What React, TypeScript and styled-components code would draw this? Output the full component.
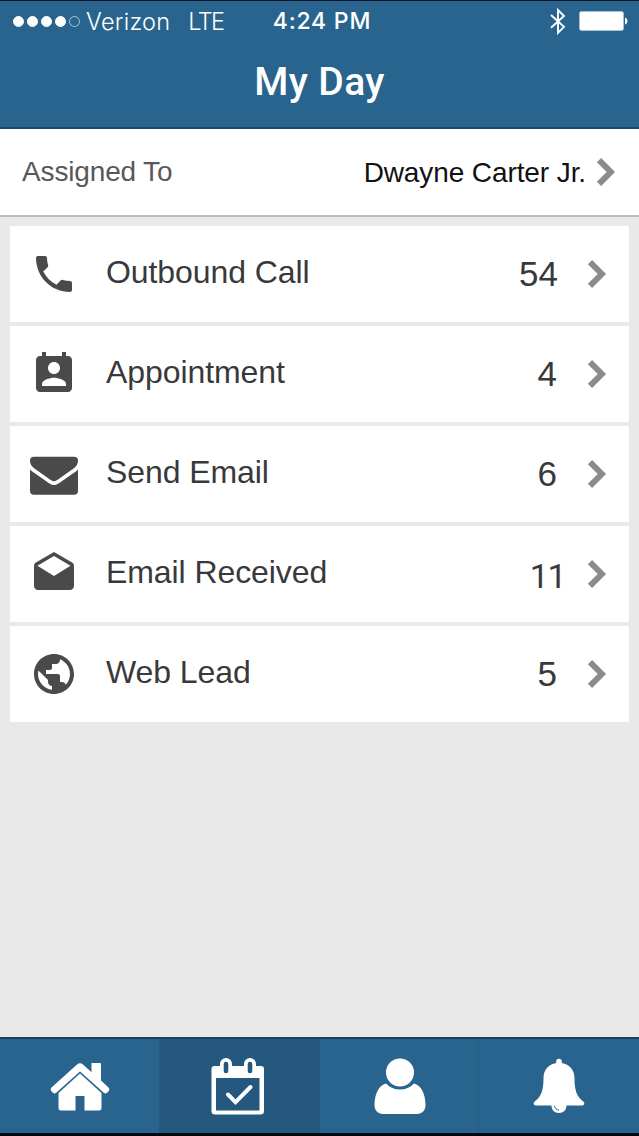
import React from "react";
import styled, { createGlobalStyle } from "styled-components";

const GlobalStyle = createGlobalStyle`
  *, *::before, *::after { box-sizing: border-box; }
  body {
    margin: 0;
    background: #e9e9ea;
    font-family: "Liberation Sans", Arial, sans-serif;
  }
`;

const Screen = styled.div`
  display: flex;
  flex-direction: column;
  width: 639px;
  height: 1136px;
  overflow: hidden;
  background: #e9e9ea;
`;

const Header = styled.header`
  display: flex;
  flex-direction: column;
  height: 129px;
  background: #28648e;
  border-top: 1px solid #0a1423;
  border-bottom: 2px solid #1f4668;
  color: #fff;
`;

const StatusBar = styled.div`
  display: grid;
  grid-template-columns: 1fr auto 1fr;
  align-items: center;
  height: 40px;
  padding: 0 11px 0 13px;
`;

const Carrier = styled.div`
  display: flex;
  align-items: center;
`;

const SignalDots = styled.div`
  display: flex;
  gap: 3px;
`;

const Dot = styled.i<{ $filled: boolean }>`
  width: 11px;
  height: 11px;
  border-radius: 50%;
  background: ${(p) => (p.$filled ? "#fff" : "transparent")};
  border: 1px solid ${(p) => (p.$filled ? "#fff" : "#a9c6da")};
`;

const StatusText = styled.span<{ $left: number; $spacing: number }>`
  margin-left: ${(p) => p.$left}px;
  padding-top: 2px;
  font: 300 23.5px/38px Inter, sans-serif;
  letter-spacing: ${(p) => p.$spacing}px;
`;

const Clock = styled.span`
  padding-left: 3px;
  font: 500 23px/38px Inter, sans-serif;
  letter-spacing: 0.8px;
`;

const StatusIcons = styled.div`
  display: flex;
  justify-content: flex-end;
  align-items: center;
  gap: 13px;
`;

const Title = styled.h1`
  margin: 0;
  padding-top: 1px;
  text-align: center;
  font: 500 39px/80px Roboto, sans-serif;
  letter-spacing: 0.4px;
`;

const AssignedRow = styled.section`
  display: flex;
  align-items: center;
  height: 88px;
  padding: 0 23px 0 22px;
  background: #fff;
  border-bottom: 2px solid #bcbcbe;
  font-size: 28px;
`;

const AssignedLabel = styled.span`
  flex: 1;
  letter-spacing: -0.15px;
  color: #58585a;
`;

const Assignee = styled.span`
  margin-right: 10px;
  padding-top: 1px;
  letter-spacing: -0.1px;
  color: #111;
`;

const List = styled.main`
  flex: 1;
  display: flex;
  flex-direction: column;
  gap: 4px;
  padding: 9px 10px 0;
`;

const Row = styled.div`
  display: flex;
  align-items: center;
  height: 96px;
  padding: 0 22px 0 20px;
  background: #fff;
`;

const RowLabel = styled.span`
  flex: 1;
  margin-left: 28px;
  padding-bottom: 3px;
  font-size: 32px;
  letter-spacing: -0.08px;
  color: #39393b;
`;

const Count = styled.span<{ $narrow: boolean; $gap: number }>`
  margin-right: ${(p) => p.$gap}px;
  padding: ${(p) => (p.$narrow ? "3px 0 0" : "0 0 1px")};
  font-family: ${(p) => (p.$narrow ? "Roboto" : '"Liberation Sans"')}, sans-serif;
  font-size: ${(p) => (p.$narrow ? 34 : 35)}px;
  letter-spacing: ${(p) => (p.$narrow ? -1.5 : 0)}px;
  color: #39393b;
`;

const TabBar = styled.nav`
  display: grid;
  grid-template-columns: 159px 161px 159px 160px;
  height: 99px;
  border-top: 2px solid #1d3f5b;
  border-bottom: 3px solid #04080d;
`;

const Tab = styled.div<{ $active?: boolean; $divider?: boolean }>`
  display: flex;
  justify-content: center;
  padding-right: ${(p) => (p.$active ? 4 : 0)}px;
  background: ${(p) => (p.$active ? "#24587e" : "#28648e")};
  box-shadow: ${(p) => (p.$divider ? "inset -1px 0 #255c84" : "none")};
`;

const TabSvg = styled.svg`
  width: 80px;
  height: 94px;
  fill: #fff;
`;

const RowSvg = styled.svg`
  width: 48px;
  height: 48px;
  fill: #4a4a4c;
`;

const Chevron = () => (
  <svg width="20" height="30" viewBox="0 0 20 30" fill="none" stroke="#8b8b8d" strokeWidth="6">
    <path d="M3 3.2L14.8 15L3 26.8" />
  </svg>
);

const icons = {
  phone: (
    <path d="M6.62 10.79c1.44 2.83 3.76 5.14 6.59 6.59l2.2-2.2c.27-.27.67-.36 1.02-.24 1.12.37 2.33.57 3.57.57.55 0 1 .45 1 1V20c0 .55-.45 1-1 1-9.39 0-17-7.61-17-17 0-.55.45-1 1-1h3.5c.55 0 1 .45 1 1 0 1.25.2 2.45.57 3.57.11.35.03.74-.25 1.02l-2.2 2.2z" />
  ),
  appointment: (
    <path d="M19 3h-1V1h-2v2H8V1H6v2H5c-1.11 0-2 .9-2 2v14c0 1.1.89 2 2 2h14c1.1 0 2-.9 2-2V5c0-1.1-.9-2-2-2zm-7 3c1.66 0 3 1.34 3 3s-1.34 3-3 3-3-1.34-3-3 1.34-3 3-3zm6 12H6v-1c0-2 4-3.1 6-3.1s6 1.1 6 3.1v1z" />
  ),
  envelope: (
    <path d="M2 3.4h20a2 2 0 0 1 2 2C24 7.2 22.9 8.5 21.6 9.4L14.7 14.2C13.8 14.8 12.9 15.6 12 15.6S10.2 14.8 9.3 14.2L2.4 9.4C1.1 8.5 0 7.2 0 5.4a2 2 0 0 1 2-2zM0 9.7C.5 10.2 1 10.6 1.5 11L9 16.2C10 16.9 11 17.5 12 17.5S14 16.9 15 16.2L22.5 11C23 10.6 23.5 10.2 24 9.7V20.4a2 2 0 0 1-2 2H2a2 2 0 0 1-2-2z" />
  ),
  openEnvelope: (
    <path d="M21.99 8c0-.72-.37-1.35-.94-1.7L12 1 2.95 6.3C2.38 6.65 2 7.28 2 8v10c0 1.1.9 2 2 2h16c1.1 0 2-.9 2-2l-.01-10zM12 13L3.74 7.84 12 3l8.26 4.84L12 13z" />
  ),
  globe: (
    <path d="M12 2C6.48 2 2 6.48 2 12s4.48 10 10 10 10-4.48 10-10S17.52 2 12 2zm-1 17.93c-3.95-.49-7-3.85-7-7.93 0-.62.08-1.21.21-1.79L9 15v1c0 1.1.9 2 2 2v1.93zm6.9-2.54c-.26-.81-1-1.39-1.9-1.39h-1v-3c0-.55-.45-1-1-1H8v-2h2c.55 0 1-.45 1-1V7h2c1.1 0 2-.9 2-2v-.41c2.93 1.19 5 4.06 5 7.41 0 2.08-.8 3.97-2.1 5.39z" />
  ),
};

const rows: { label: string; count: string; gap: number; icon: keyof typeof icons }[] = [
  { label: "Outbound Call", count: "54", gap: 29, icon: "phone" },
  { label: "Appointment", count: "4", gap: 30, icon: "appointment" },
  { label: "Send Email", count: "6", gap: 30, icon: "envelope" },
  { label: "Email Received", count: "11", gap: 22, icon: "openEnvelope" },
  { label: "Web Lead", count: "5", gap: 30, icon: "globe" },
];

export default function App() {
  return (
    <>
      <GlobalStyle />
      <Screen>
        <Header>
          <StatusBar>
            <Carrier>
              <SignalDots>
                {[true, true, true, true, false].map((filled, i) => (
                  <Dot key={i} $filled={filled} />
                ))}
              </SignalDots>
              <StatusText $left={6} $spacing={0.25}>Verizon</StatusText>
              <StatusText $left={18} $spacing={-1.6}>LTE</StatusText>
            </Carrier>
            <Clock>4:24 PM</Clock>
            <StatusIcons>
              <svg width="16" height="27" viewBox="0 0 16 27" fill="none" stroke="#fff" strokeWidth="1.9">
                <path d="M1 7L14 18.8L8 24.8V2L14 8L1 19.8" />
              </svg>
              <svg width="49" height="20" viewBox="0 0 49 20" fill="#fff">
                <rect x=".5" y=".5" width="44" height="19" rx="2" fill="#fff" stroke="#a5c2d6" />
                <path d="M46 6.5C49.2 7.5 49.2 12.5 46 13.5Z" />
              </svg>
            </StatusIcons>
          </StatusBar>
          <Title>My Day</Title>
        </Header>

        <AssignedRow>
          <AssignedLabel>Assigned To</AssignedLabel>
          <Assignee>Dwayne Carter Jr.</Assignee>
          <Chevron />
        </AssignedRow>

        <List>
          {rows.map((row) => (
            <Row key={row.label}>
              <RowSvg viewBox="0 0 24 24">{icons[row.icon]}</RowSvg>
              <RowLabel>{row.label}</RowLabel>
              <Count $narrow={row.count === "11"} $gap={row.gap}>{row.count}</Count>
              <Chevron />
            </Row>
          ))}
        </List>

        <TabBar>
          <Tab>
            <TabSvg viewBox="0 0 80 94">
              <path d="M51.5 24H60a1 1 0 0 1 1 1V41.5L68.5 48.5a2.6 2.6 0 0 1 .3 3.5l-1.5 1.6a2.6 2.6 0 0 1-3.5.2L40 32.5L16.2 53.8a2.6 2.6 0 0 1-3.5-.2L11.2 52a2.6 2.6 0 0 1 .3-3.5L37 25.5a4.5 4.5 0 0 1 6 0L51.5 33.2Z" />
              <path d="M40 34.5L61.5 54V69a2.5 2.5 0 0 1-2.5 2.5H44.5V57H35.5V71.5H21a2.5 2.5 0 0 1-2.5-2.5V54Z" />
            </TabSvg>
          </Tab>
          <Tab $active>
            <TabSvg viewBox="0 0 80 94">
              <path fillRule="evenodd" d="M16.5 27H22V25a6 6 0 0 1 12 0V27H46V25a6 6 0 0 1 12 0V27H63a3 3 0 0 1 3 3V72a3.5 3.5 0 0 1-3.5 3.5H17a3.5 3.5 0 0 1-3.5-3.5V30a3 3 0 0 1 3-3ZM18 39V71.5H61.5V39ZM25.7 25V32a2.3 2.3 0 0 0 4.6 0V25a2.3 2.3 0 0 0-4.6 0ZM49.7 25V32a2.3 2.3 0 0 0 4.6 0V25a2.3 2.3 0 0 0-4.6 0Z" />
              <path d="M30 55.5L37.5 63.2L52.5 48" fill="none" stroke="#fff" strokeWidth="4" strokeLinecap="round" />
            </TabSvg>
          </Tab>
          <Tab $divider>
            <TabSvg viewBox="0 0 80 94">
              <circle cx="40" cy="33.5" r="14" />
              <path d="M26 44.5C30 48.5 34.5 50.5 40 50.5S50 48.5 54 44.5C61 46 65.5 55 65.5 66C65.5 71.5 62 75 57 75H23C18 75 14.5 71.5 14.5 66C14.5 55 19 46 26 44.5Z" />
            </TabSvg>
          </Tab>
          <Tab>
            <TabSvg viewBox="0 0 80 94">
              <path d="M37.2 24V22.5a2.8 2.8 0 0 1 5.6 0V24C50.5 25.3 55.5 31 55.5 39C55.5 52 58 57.5 64 62.2C66.5 64.2 65 66.5 62.5 66.5H47.5C47.5 71 44.5 74 40 74S32.5 71 32.5 66.5H17.5C15 66.5 13.5 64.2 16 62.2C22 57.5 24.5 52 24.5 39C24.5 31 29.5 25.3 37.2 24Z" />
              <path d="M35.5 67C36 69.5 37.5 70.8 40 71" fill="none" stroke="#28648e" strokeWidth="1" />
            </TabSvg>
          </Tab>
        </TabBar>
      </Screen>
    </>
  );
}
